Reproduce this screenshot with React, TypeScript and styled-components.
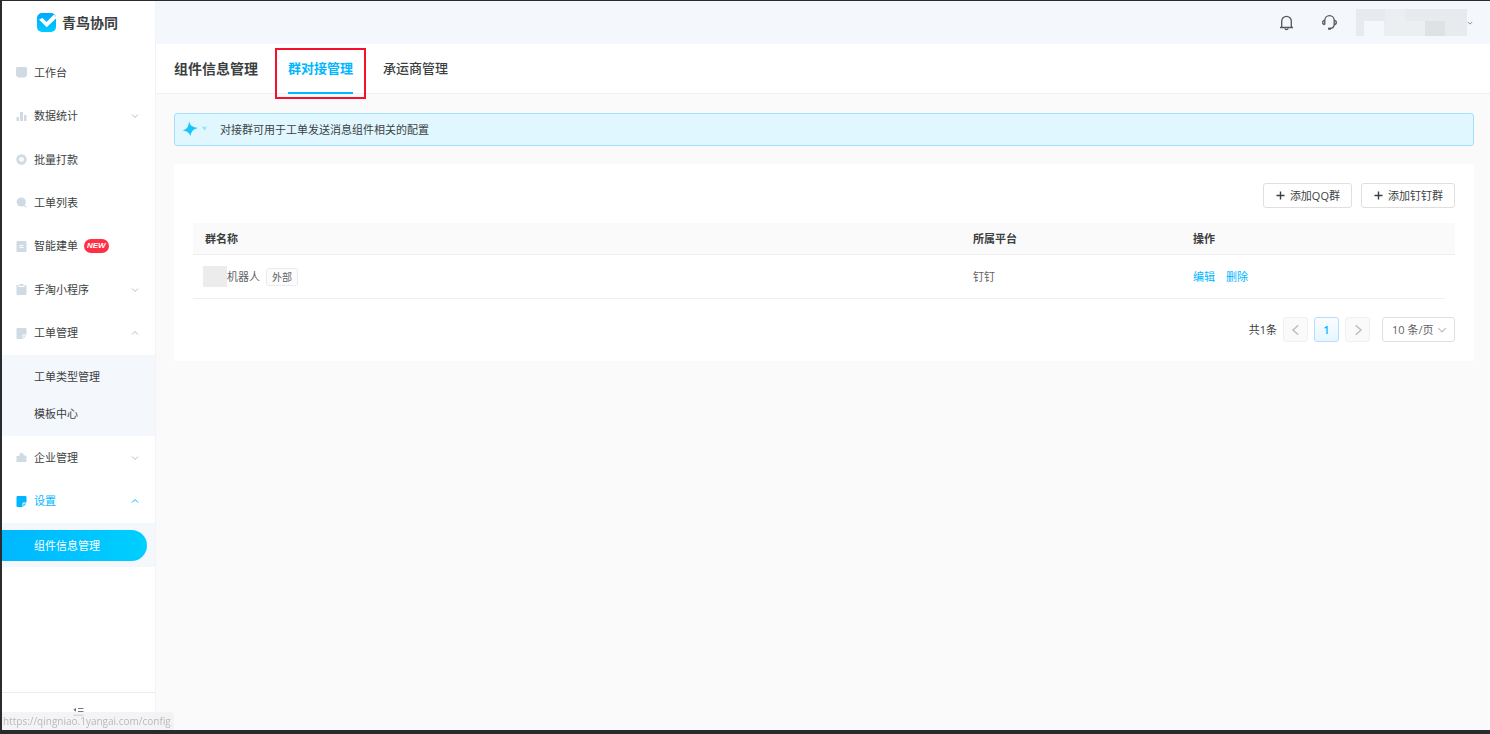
import React from "react";
import styled, { createGlobalStyle, css } from "styled-components";

const color = {
  brand: "#00b7ff",
  text: "#3c3f42",
  soft: "#5f6366",
  icon: "#cfdae2",
  line: "#efefef",
  border: "#dfdfdf",
  tint: "#f4f8fc",
  page: "#fafafa",
};

const GlobalStyle = createGlobalStyle`
  *, *::before, *::after { box-sizing: border-box; }
  body {
    margin: 0;
    background: ${color.page};
    color: ${color.text};
    font: 11px/18px "Open Sans", "Noto Sans CJK SC", sans-serif;
  }
  button, select { font: inherit; color: inherit; }
  a { color: inherit; text-decoration: none; }
  ul { list-style: none; margin: 0; padding: 0; }
  h1 { margin: 0; }
  svg { display: block; flex: none; }
`;

const Shell = styled.div`
  display: flex;
  min-height: 100vh;
  border: solid #2b2b2d;
  border-width: 1px 0 4px 2px;
`;

const Sidebar = styled.aside`
  display: flex;
  flex-direction: column;
  flex: none;
  width: 154px;
  background: #fff;
  border-right: 1px solid #f2f3f4;
`;

const Brand = styled.a`
  display: flex;
  align-items: center;
  gap: 6px;
  height: 43px;
  padding-left: 35px;
  font-size: 14px;
  font-weight: 700;
`;

const Nav = styled.nav`
  flex: 1;
  padding-top: 7px;
`;

const MenuGroup = styled.ul<{ $height: number }>`
  display: grid;
  grid-auto-rows: 1fr;
  height: ${(p) => p.$height}px;
`;

const MenuItem = styled.li`
  display: flex;
`;

const itemBase = css`
  display: flex;
  align-items: center;
  width: 100%;
  padding: 0 16px 0 14px;
`;

const MenuLink = styled.a`
  ${itemBase}
`;

const MenuToggle = styled.button<{ $active?: boolean }>`
  ${itemBase}
  border: 0;
  background: none;
  text-align: left;
  color: ${(p) => (p.$active ? color.brand : color.text)};
`;

const MenuIcon = styled.span<{ $active?: boolean }>`
  width: 18px;
  color: ${(p) => (p.$active ? color.brand : color.icon)};
`;

const MenuLabel = styled.span`
  flex: none;
`;

const MenuArrow = styled.span<{ $active?: boolean }>`
  margin-left: auto;
  color: ${(p) => (p.$active ? color.brand : "#b8bcc0")};
`;

const NewBadge = styled.span`
  margin-left: 6px;
  padding: 0 3px;
  border-radius: 7px;
  background: #ff3045;
  color: #fff;
  font: italic 700 8px/14px "Liberation Sans", sans-serif;
`;

const SubMenu = styled.ul`
  padding: 3px 0 4px;
  background: ${color.tint};
`;

const SubLink = styled.a`
  display: flex;
  align-items: center;
  height: 37px;
  padding-left: 32px;
`;

const ActiveSub = styled.ul`
  padding: 7px 8px 6px 0;
  background: ${color.tint};
`;

const ActiveLink = styled.a`
  display: flex;
  align-items: center;
  height: 31px;
  padding-left: 32px;
  border-radius: 0 16px 16px 0;
  background: linear-gradient(90deg, #00b7ff, #00cfff);
  color: #fff;
`;

const SidebarFoot = styled.div`
  display: flex;
  justify-content: center;
  height: 38px;
  border-top: 1px solid #ececec;
`;

const CollapseButton = styled.button`
  padding: 13px 4px;
  border: 0;
  background: none;
  color: #77797b;
`;

const Main = styled.div`
  display: flex;
  flex-direction: column;
  flex: 1;
  min-width: 0;
`;

const TopBar = styled.header`
  display: flex;
  align-items: center;
  justify-content: flex-end;
  height: 43px;
  padding-right: 17px;
  background: ${color.tint};
`;

const Tools = styled.div`
  display: flex;
  gap: 26px;
  margin-right: 18px;
`;

const IconButton = styled.button`
  display: flex;
  padding: 0;
  border: 0;
  background: none;
  color: #55585b;
`;

const Account = styled.button`
  display: flex;
  align-items: center;
  padding: 0;
  border: 0;
  background: none;
  color: #6c6f72;
`;

const Tabs = styled.nav`
  display: flex;
  align-items: stretch;
  gap: 30px;
  height: 50px;
  padding-left: 18px;
  background: #fff;
  border-bottom: 1px solid #f0f0f0;
`;

const PageTitle = styled.h1`
  font-size: 14px;
  line-height: 50px;
  font-weight: 700;
`;

const Tab = styled.a<{ $active?: boolean }>`
  position: relative;
  height: 50px;
  border-bottom: 2px solid ${(p) => (p.$active ? color.brand : "transparent")};
  font-size: 13px;
  line-height: 48px;
  font-weight: ${(p) => (p.$active ? 700 : 500)};
  color: ${(p) => (p.$active ? color.brand : color.text)};
`;

const Highlight = styled.span`
  position: absolute;
  inset: 4px -13px -7px;
  border: 2px solid #f5112d;
  pointer-events: none;
`;

const Content = styled.main`
  padding: 19px 16px 0 18px;
`;

const Notice = styled.div`
  display: flex;
  align-items: center;
  gap: 12px;
  height: 33px;
  padding-left: 7px;
  border: 1px solid #a3e2fa;
  border-radius: 3px;
  background: #e0f7ff;
`;

const Card = styled.section`
  margin-top: 18px;
  padding: 19px;
  border-radius: 2px;
  background: #fff;
`;

const Toolbar = styled.div`
  display: flex;
  justify-content: flex-end;
  gap: 9px;
  margin-bottom: 15px;
`;

const AddButton = styled.button`
  display: flex;
  align-items: center;
  gap: 4px;
  height: 25px;
  padding: 0 11px;
  border: 1px solid ${color.border};
  border-radius: 3px;
  background: #fff;
`;

const Table = styled.table`
  width: 100%;
  border-collapse: separate;
  border-spacing: 0;
  table-layout: fixed;
`;

const Col = styled.col<{ $width?: string }>`
  width: ${(p) => p.$width ?? "auto"};
`;

const Th = styled.th`
  height: 32px;
  padding: 0 12px;
  border-bottom: 1px solid ${color.line};
  background: ${color.page};
  text-align: left;
  font-weight: 700;
`;

const Gutter = styled.td<{ $head?: boolean }>`
  padding: 0;
  background: ${(p) => (p.$head ? color.page : "none")};
  border-bottom: ${(p) => (p.$head ? `1px solid ${color.line}` : "0")};
`;

const Td = styled.td`
  height: 44px;
  padding: 0 12px;
  border-bottom: 1px solid ${color.line};
  color: ${color.soft};
`;

const NameCell = styled.div`
  display: flex;
  align-items: center;
`;

const Masked = styled.span`
  width: 24px;
  height: 21px;
  margin-left: -2px;
  background: #ececec;
`;

const Tag = styled.span`
  margin-left: 6px;
  padding: 0 5px;
  border: 1px solid #ebebeb;
  border-radius: 3px;
  background: #fcfcfc;
  font-size: 10px;
  line-height: 16px;
`;

const Actions = styled.div`
  display: flex;
  gap: 11px;
  color: ${color.brand};
`;

const Pager = styled.div`
  display: flex;
  align-items: center;
  justify-content: flex-end;
  gap: 6px;
  margin-top: 18px;
`;

const PageButton = styled.button<{ $current?: boolean }>`
  display: flex;
  align-items: center;
  justify-content: center;
  width: 25px;
  height: 25px;
  padding: 0;
  border: 1px solid ${(p) => (p.$current ? "#b9dcff" : "#f0f0f0")};
  border-radius: 3px;
  background: ${(p) => (p.$current ? "linear-gradient(#fafdff, #e6f6ff)" : "#fafafa")};
  color: ${(p) => (p.$current ? color.brand : "#bdbdbd")};
  font-weight: ${(p) => (p.$current ? 600 : 400)};
`;

const SizePicker = styled.label`
  position: relative;
  width: 73px;
  margin-left: 6px;
  color: ${color.soft};
`;

const SizeSelect = styled.select`
  display: block;
  width: 100%;
  height: 25px;
  padding: 0 0 0 9px;
  border: 1px solid ${color.border};
  border-radius: 3px;
  background: #fff;
  appearance: none;
`;

const SizeArrow = styled.span`
  position: absolute;
  top: 8px;
  right: 8px;
  color: #bdbdbd;
  pointer-events: none;
`;

const StatusBubble = styled.div`
  position: fixed;
  left: 2px;
  bottom: 4px;
  height: 18px;
  padding: 0 3px 0 1px;
  border-radius: 0 3px 0 0;
  background: rgba(240, 240, 242, 0.7);
  color: #b9b9bb;
  font: 10px/18px "Open Sans", sans-serif;
`;

function Chevron({ dir = "down", size = 8, width = 1 }: { dir?: "down" | "up" | "left" | "right"; size?: number; width?: number }) {
  const path = { down: "M1 2.500l3 3 3-3", up: "M1 5.500l3-3 3 3", left: "M5.500 .8L2 4l3.500 3.200", right: "M2.500 .8L6 4 2.500 7.200" }[dir];
  return (
    <svg width={size} height={size} viewBox="0 0 8 8" fill="none" stroke="currentColor" strokeWidth={width} aria-hidden="true">
      <path d={path} />
    </svg>
  );
}

type IconName = "desk" | "chart" | "coin" | "search" | "doc" | "clip" | "note" | "company";

const shapes: Record<IconName, React.ReactNode> = {
  desk: <path d="M1.500 0h8A1.500 1.500 0 0 1 11 1.500V8.500L9 10.500H2L0 8.500V1.500A1.500 1.500 0 0 1 1.500 0z" />,
  chart: <path d="M.5 6h2.500v4H.5zM4 1h3v9H4zM8 4h2.500v6H8z" />,
  coin: (
    <>
      <circle cx="5.500" cy="5.500" r="3.800" fill="none" stroke="currentColor" strokeWidth="2.800" />
      <path d="M5 4h1v3.500H5z" opacity=".4" />
    </>
  ),
  search: (
    <>
      <circle cx="5.200" cy="5" r="4.600" />
      <path d="M8 8.200l2.500 2.200" stroke="currentColor" strokeWidth="1.200" />
    </>
  ),
  doc: (
    <>
      <rect x=".5" width="10" height="11" rx="1" />
      <path d="M3.500 4.500h4M3.500 6.500h4" stroke="#fff" />
    </>
  ),
  clip: (
    <>
      <path d="M.5 1H2.500v2h6V1h2v9a1 1 0 0 1-1 1h-8a1 1 0 0 1-1-1z" />
      <path d="M3.500 0h4v2h-4z" />
    </>
  ),
  note: (
    <>
      <path d="M1.500 0h8a1 1 0 0 1 1 1v5.500h-3a1 1 0 0 0-1 1V11h-5a1 1 0 0 1-1-1V1a1 1 0 0 1 1-1z" />
      <path d="M7.300 7.500h3L7.300 10.800z" opacity=".85" />
    </>
  ),
  company: <path d="M.5 4H3.500V2L5.500 .5l2 1.500V3l3 1V10H.5z" />,
};

function Icon({ name }: { name: IconName }) {
  return (
    <svg width="11" height="11" viewBox="0 0 11 11" fill="currentColor" aria-hidden="true">
      {shapes[name]}
    </svg>
  );
}

type Item = { label: string; icon: IconName; arrow?: "up" | "down"; isNew?: boolean; active?: boolean };

const primary: Item[] = [
  { label: "工作台", icon: "desk" },
  { label: "数据统计", icon: "chart", arrow: "down" },
  { label: "批量打款", icon: "coin" },
  { label: "工单列表", icon: "search" },
  { label: "智能建单", icon: "doc", isNew: true },
  { label: "手淘小程序", icon: "clip", arrow: "down" },
  { label: "工单管理", icon: "note", arrow: "up" },
];

const secondary: Item[] = [
  { label: "企业管理", icon: "company", arrow: "down" },
  { label: "设置", icon: "note", arrow: "up", active: true },
];

function MenuEntry({ item }: { item: Item }) {
  const body = (
    <>
      <MenuIcon $active={item.active}>
        <Icon name={item.icon} />
      </MenuIcon>
      <MenuLabel>{item.label}</MenuLabel>
      {item.isNew && <NewBadge>NEW</NewBadge>}
      {item.arrow && (
        <MenuArrow $active={item.active}>
          <Chevron dir={item.arrow} />
        </MenuArrow>
      )}
    </>
  );
  return (
    <MenuItem>
      {item.arrow ? (
        <MenuToggle type="button" $active={item.active} aria-expanded={item.arrow === "up"}>
          {body}
        </MenuToggle>
      ) : (
        <MenuLink href="#">{body}</MenuLink>
      )}
    </MenuItem>
  );
}

function Plus() {
  return (
    <svg width="11" height="11" viewBox="0 0 11 11" stroke="currentColor" strokeWidth="1.400" aria-hidden="true">
      <path d="M5.500 1.500v8M1.500 5.500h8" />
    </svg>
  );
}

export default function App() {
  return (
    <>
      <GlobalStyle />
      <Shell>
        <Sidebar>
          <Brand href="#">
            <svg width="19" height="19" viewBox="0 0 19 19" aria-hidden="true">
              <defs>
                <linearGradient id="brand" x1="0" y1="0" x2="0" y2="1">
                  <stop offset="0" stopColor="#00a8ff" />
                  <stop offset="1" stopColor="#00cbff" />
                </linearGradient>
              </defs>
              <rect width="19" height="19" rx="5" fill="url(#brand)" />
              <path d="M2 6.500l3.500-1.500 4 4L17 1.500 19 4v1.500l-9.300 8.700z" fill="#fff" />
            </svg>
            青鸟协同
          </Brand>
          <Nav aria-label="主菜单">
            <MenuGroup $height={304}>
              {primary.map((item) => (
                <MenuEntry key={item.label} item={item} />
              ))}
            </MenuGroup>
            <SubMenu>
              <li><SubLink href="#">工单类型管理</SubLink></li>
              <li><SubLink href="#">模板中心</SubLink></li>
            </SubMenu>
            <MenuGroup $height={87}>
              {secondary.map((item) => (
                <MenuEntry key={item.label} item={item} />
              ))}
            </MenuGroup>
            <ActiveSub>
              <li><ActiveLink href="#" aria-current="page">组件信息管理</ActiveLink></li>
            </ActiveSub>
          </Nav>
          <SidebarFoot>
            <CollapseButton type="button" aria-label="收起菜单">
              <svg width="11" height="9" viewBox="0 0 11 9" fill="none" stroke="currentColor" aria-hidden="true">
                <path d="M5 1.500h5.500M5 4.500h5.500M.5 8.200h10" />
                <path d="M3 .8v4L.3 2.800z" fill="currentColor" stroke="none" />
              </svg>
            </CollapseButton>
          </SidebarFoot>
        </Sidebar>

        <Main>
          <TopBar>
            <Tools>
              <IconButton type="button" aria-label="通知">
                <svg width="17" height="17" viewBox="0 0 17 17" fill="none" stroke="currentColor" strokeWidth="1.300" aria-hidden="true">
                  <path d="M3.700 13.300V7.200a4.800 4.800 0 0 1 9.600 0v6.100M2 13.500h13" />
                  <path d="M7 14.200a1.500 1.500 0 0 0 3 0" />
                </svg>
              </IconButton>
              <IconButton type="button" aria-label="客服">
                <svg width="17" height="17" viewBox="0 0 17 17" fill="none" stroke="currentColor" strokeWidth="1.300" aria-hidden="true">
                  <path d="M3.800 10.500V6.400a4.700 4.700 0 0 1 9.400 0v4.200c0 2.300-1.500 3.700-4.200 3.900" />
                  <path d="M3.800 6.300C2.300 6.300 1.700 7.100 1.700 8.400s.6 2.100 2.100 2.100M13.200 6.300c1.500 0 2.100.8 2.100 2.100s-.6 2.100-2.100 2.100" />
                  <path d="M7 14.700h3" strokeWidth="2" />
                </svg>
              </IconButton>
            </Tools>
            <Account type="button" aria-label="账户">
              <svg width="111" height="27" viewBox="0 0 111 27" aria-hidden="true">
                <path fill="#eceff1" d="M0 0h111v27H0z" />
                <path fill="#e8ebed" d="M0 0h8v27H0zM8 0h21v12H8z" />
                <path fill="#f4f8fc" d="M8 12h20v15H8z" />
                <path fill="#e8ebee" d="M49 0h62v12H49zM89 12h22v15H89z" />
                <path fill="#dfe2e5" d="M69 12h20v15H69z" />
              </svg>
              <Chevron size={6} width={1} />
            </Account>
          </TopBar>

          <Tabs aria-label="组件信息">
            <PageTitle>组件信息管理</PageTitle>
            <Tab href="#" $active aria-current="page">
              群对接管理
              <Highlight />
            </Tab>
            <Tab href="#">承运商管理</Tab>
          </Tabs>

          <Content>
            <Notice>
              <svg width="26" height="17" viewBox="0 0 26 17" aria-hidden="true">
                <path d="M7 0c1 4.500 2.300 5.500 9 7-5 1.500-6.500 3-7.500 8C7 11.500 5.500 10.200.5 9.500 5 8 6.500 6.500 7 0z" fill="#17c5f8" />
                <path d="M20 5l2.500 1.200L25 5l-1.200 2.500L22.500 9.500l-1.300-2z" fill="#8fe0fa" />
              </svg>
              对接群可用于工单发送消息组件相关的配置
            </Notice>

            <Card>
              <Toolbar>
                <AddButton type="button"><Plus />添加QQ群</AddButton>
                <AddButton type="button"><Plus />添加钉钉群</AddButton>
              </Toolbar>
              <Table>
                <colgroup>
                  <Col />
                  <Col $width="220px" />
                  <Col $width="264px" />
                  <Col $width="10px" />
                </colgroup>
                <thead>
                  <tr>
                    <Th scope="col">群名称</Th>
                    <Th scope="col">所属平台</Th>
                    <Th scope="col">操作</Th>
                    <Gutter $head />
                  </tr>
                </thead>
                <tbody>
                  <tr>
                    <Td>
                      <NameCell>
                        <Masked />
                        机器人
                        <Tag>外部</Tag>
                      </NameCell>
                    </Td>
                    <Td>钉钉</Td>
                    <Td>
                      <Actions>
                        <a href="#">编辑</a>
                        <a href="#">删除</a>
                      </Actions>
                    </Td>
                    <Gutter />
                  </tr>
                </tbody>
              </Table>
              <Pager>
                <span>共1条</span>
                <PageButton type="button" aria-label="上一页"><Chevron dir="left" size={12} width={1} /></PageButton>
                <PageButton type="button" $current aria-current="page">1</PageButton>
                <PageButton type="button" aria-label="下一页"><Chevron dir="right" size={12} width={1} /></PageButton>
                <SizePicker>
                  <SizeSelect aria-label="每页条数" defaultValue="10">
                    <option value="10">10 条/页</option>
                    <option value="20">20 条/页</option>
                  </SizeSelect>
                  <SizeArrow><Chevron size={10} /></SizeArrow>
                </SizePicker>
              </Pager>
            </Card>
          </Content>
        </Main>
      </Shell>
      <StatusBubble>https://qingniao.1yangai.com/config</StatusBubble>
    </>
  );
}
